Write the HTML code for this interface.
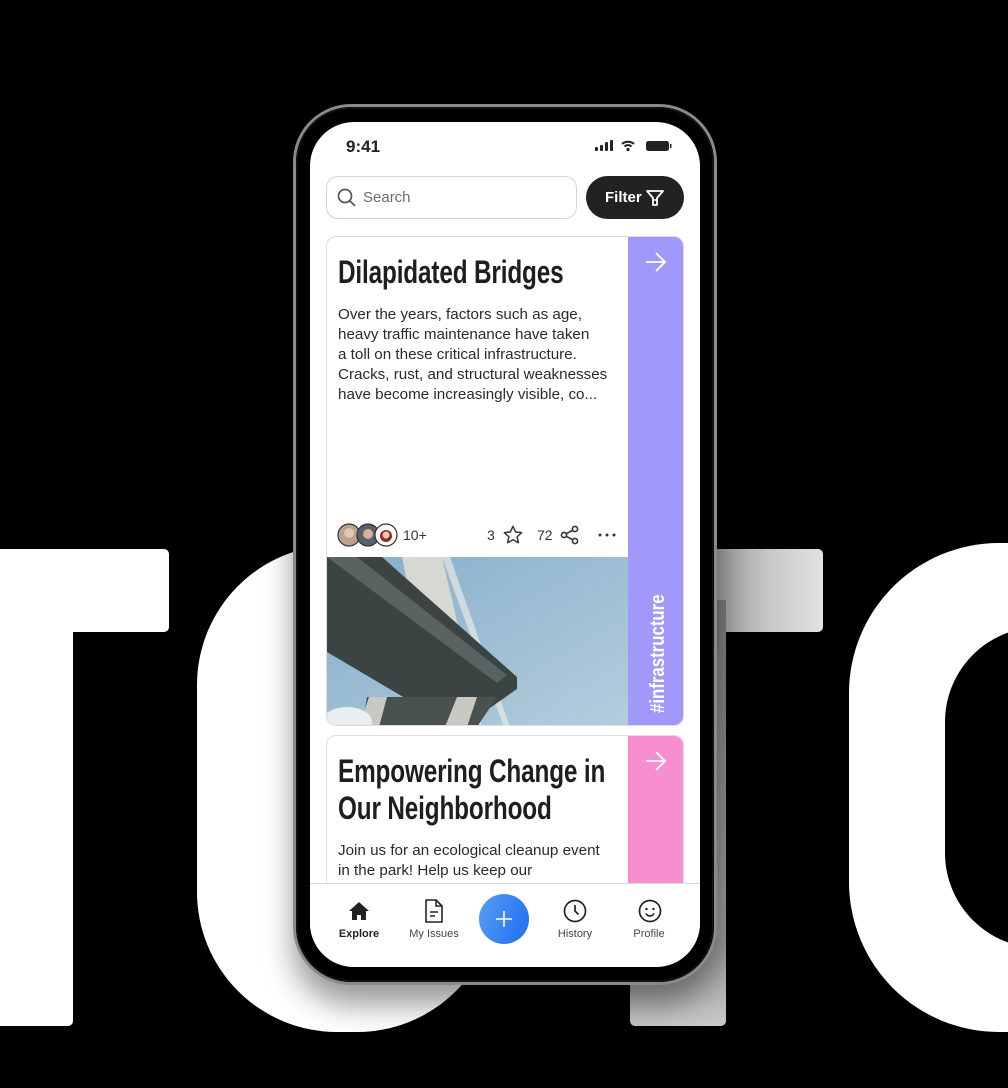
<!DOCTYPE html>
<html><head><meta charset="utf-8"><style>
*{margin:0;padding:0;box-sizing:border-box}
body{width:1008px;height:1088px;background:#000;position:relative;overflow:hidden;font-family:"Liberation Sans",sans-serif}
.a{position:absolute}
.w{background:#fff}
.t{font-family:"Liberation Sans Narrow","Liberation Sans",sans-serif;font-weight:700;color:#1e1e1e;white-space:nowrap;transform-origin:left top;letter-spacing:-0.2px}
.b{font-size:15.2px;color:#2a2a2a;line-height:20px;white-space:nowrap}
.nl{font-size:11px;color:#444;text-align:center;width:80px}
</style></head><body>
<div class="a w" style="left:-100px;top:549px;width:269px;height:83px;border-radius:0 5px 5px 0"></div>
<div class="a w" style="left:-10px;top:600px;width:83px;height:426px;border-radius:0 0 5px 0"></div>
<div class="a w" style="left:197px;top:545px;width:300px;height:487px;border-radius:140px"></div>
<div class="a" style="left:560px;top:549px;width:263px;height:83px;border-radius:0 5px 5px 0;background:linear-gradient(90deg,#888 0%,#999 60%,#c8c8c8 80%,#e2e2e2 100%)"></div>
<div class="a" style="left:630px;top:600px;width:96px;height:426px;border-radius:0 0 5px 5px;background:linear-gradient(180deg,#777 0%,#999 80%,#c8c8c8 100%)"></div>
<div class="a w" style="left:849px;top:543px;width:400px;height:489px;border-radius:150px"></div>
<div class="a" style="left:945px;top:627px;width:200px;height:321px;border-radius:95px;background:#000"></div>
<div class="a" style="left:293px;top:104px;width:424px;height:881px;border-radius:58px;background:#000;border:3px solid #8a8a8a;box-shadow:0 20px 30px rgba(0,0,0,.4)"></div>
<div class="a" style="left:296px;top:107px;width:418px;height:875px;border-radius:55px;border:2px solid #111"></div>
<div class="a w" style="left:310px;top:122px;width:390px;height:845px;border-radius:44px;overflow:hidden">
 <div class="a" style="left:36px;top:15px;font-size:17px;font-weight:700;color:#222">9:41</div>
 <svg class="a" style="left:284px;top:17px" width="80" height="14" viewBox="0 0 80 14">
  <rect x="1" y="8" width="3" height="4" rx="1" fill="#222"/><rect x="6" y="6" width="3" height="6" rx="1" fill="#222"/><rect x="11" y="3" width="3" height="9" rx="1" fill="#222"/><rect x="16" y="1" width="3" height="11" rx="1" fill="#222"/>
  <path d="M28 5a9 9 0 0 1 12 0M30.5 7.5a5 5 0 0 1 7 0" stroke="#222" stroke-width="2" fill="none"/><circle cx="34" cy="10.5" r="1.6" fill="#222"/>
  <rect x="52" y="2" width="23" height="10" rx="2.5" fill="#222"/><rect x="76" y="5" width="1.5" height="4" fill="#222"/>
 </svg>
 <div class="a" style="left:16px;top:54px;width:251px;height:43px;border:1px solid #d4d4d4;border-radius:12px"></div>
 <svg class="a" style="left:27px;top:66px" width="20" height="20" viewBox="0 0 20 20"><circle cx="8" cy="8" r="6.5" stroke="#555" stroke-width="1.7" fill="none"/><path d="M13 13l5 5" stroke="#555" stroke-width="1.7"/></svg>
 <div class="a" style="left:53px;top:67px;font-size:15px;color:#6b6b6b">Search</div>
 <div class="a" style="left:276px;top:54px;width:98px;height:43px;border-radius:22px;background:#222"></div>
 <div class="a" style="left:295px;top:67px;font-size:15px;color:#fff;font-weight:700">Filter</div>
 <svg class="a" style="left:335px;top:66px" width="20" height="20" viewBox="0 0 20 20"><path d="M2 3h16l-6 7v7H8v-7z" stroke="#fff" stroke-width="1.8" fill="none" stroke-linejoin="round"/><path d="M8 12h4" stroke="#fff" stroke-width="1.6"/></svg>

 <div class="a" style="left:16px;top:114px;width:358px;height:490px;border:1px solid #dcdcdc;border-radius:10px;overflow:hidden">
  <div class="a" style="left:301px;top:-1px;width:57px;height:492px;background:#a199f9"></div>
  <svg class="a" style="left:317px;top:14px" width="24" height="22" viewBox="0 0 24 22"><path d="M2 11h19M12 2l9 9-9 9" stroke="#fff" stroke-width="1.8" fill="none"/></svg>
  <div class="a" style="left:320px;top:476px;transform:rotate(-90deg) scaleX(.84);transform-origin:left top;font-weight:700;font-size:20px;color:#fff;white-space:nowrap">#infrastructure</div>
  <div class="a t" style="left:11px;top:17px;font-size:32px;transform:scaleX(.76)">Dilapidated Bridges</div>
  <div class="a b" style="left:11px;top:68px">Over the years, factors such as age,<br>heavy traffic maintenance have taken<br>a toll on these critical infrastructure.<br>Cracks, rust, and structural weaknesses<br>have become increasingly visible, co...</div>
  <svg class="a" style="left:10px;top:285px" width="64" height="26" viewBox="0 0 64 26">
   <circle cx="12" cy="13" r="11" fill="#b9a38f" stroke="#333" stroke-width="1.2"/><circle cx="12" cy="11" r="5" fill="#e4c7b0"/>
   <circle cx="31" cy="13" r="11" fill="#56616b" stroke="#333" stroke-width="1.2"/><circle cx="31" cy="12" r="5" fill="#d6b29a"/>
   <circle cx="49" cy="13" r="11" fill="#fff" stroke="#333" stroke-width="1.2"/><circle cx="49" cy="14" r="6" fill="#8c2b1e"/><circle cx="49" cy="13" r="3.5" fill="#f0c8b0"/>
  </svg>
  <div class="a" style="left:76px;top:290px;font-size:14px;color:#333">10+</div>
  <div class="a" style="left:160px;top:290px;font-size:14px;color:#333">3</div>
  <svg class="a" style="left:175px;top:287px" width="22" height="22" viewBox="0 0 24 24"><path d="M12 2.5l2.9 6.2 6.6.7-5 4.5 1.4 6.6L12 17.2l-5.9 3.3 1.4-6.6-5-4.5 6.6-.7z" stroke="#333" stroke-width="1.6" fill="none" stroke-linejoin="round"/></svg>
  <div class="a" style="left:210px;top:290px;font-size:14px;color:#333">72</div>
  <svg class="a" style="left:233px;top:288px" width="20" height="20" viewBox="0 0 20 20"><circle cx="15" cy="4" r="2.6" stroke="#333" stroke-width="1.6" fill="none"/><circle cx="4" cy="10" r="2.6" stroke="#333" stroke-width="1.6" fill="none"/><circle cx="15" cy="16" r="2.6" stroke="#333" stroke-width="1.6" fill="none"/><path d="M6.3 8.7l6.4-3.4M6.3 11.3l6.4 3.4" stroke="#333" stroke-width="1.6"/></svg>
  <svg class="a" style="left:270px;top:295px" width="20" height="6" viewBox="0 0 20 6"><circle cx="3" cy="3" r="1.5" fill="#333"/><circle cx="10" cy="3" r="1.5" fill="#333"/><circle cx="17" cy="3" r="1.5" fill="#333"/></svg>
  <svg class="a" style="left:0;top:320px" width="301" height="170" viewBox="0 0 301 170">
   <defs><linearGradient id="sky" x1="0" y1="0" x2="1" y2="1"><stop offset="0" stop-color="#86aecb"/><stop offset="1" stop-color="#b4cddd"/></linearGradient></defs>
   <rect width="301" height="170" fill="url(#sky)"/>
   <path d="M75 0l40 0 40 170-45 0z" fill="#d8d8d2"/>
   <path d="M115 0l8 0 60 170-6 0z" fill="#e8e8e4" opacity=".7"/>
   <path d="M0 0h55l135 120v12L150 160 110 160 0 95z" fill="#3b4443"/>
   <path d="M0 0h30l150 118-10 8z" fill="#5a6361"/>
   <path d="M40 140h130l-20 30H35z" fill="#4a5250"/>
   <path d="M42 140l-10 30h20l8-30z" fill="#c9c9c3"/>
   <path d="M130 140l-12 30h22l10-30z" fill="#c9c9c3"/>
   <ellipse cx="20" cy="165" rx="25" ry="15" fill="#e8eef2"/>
  </svg>
 </div>

 <div class="a" style="left:16px;top:613px;width:358px;height:200px;border:1px solid #dcdcdc;border-radius:10px;overflow:hidden">
  <div class="a" style="left:301px;top:-1px;width:57px;height:202px;background:#f78ecf"></div>
  <svg class="a" style="left:317px;top:14px" width="24" height="22" viewBox="0 0 24 22"><path d="M2 11h19M12 2l9 9-9 9" stroke="#fff" stroke-width="1.8" fill="none"/></svg>
  <div class="a t" style="left:11px;top:17px;font-size:32px;line-height:37px;transform:scaleX(.76)">Empowering Change in<br>Our Neighborhood</div>
  <div class="a b" style="left:11px;top:105px">Join us for an ecological cleanup event<br>in the park! Help us keep our</div>
 </div>

 <div class="a w" style="left:0;top:761px;width:390px;height:84px;border-top:1px solid #d8d8d8"></div>
 <svg class="a" style="left:38px;top:779px" width="22" height="20" viewBox="0 0 22 20"><path d="M11 1L1 10h3v9h5v-5h4v5h5v-9h3z" fill="#222"/></svg>
 <div class="a nl" style="left:9px;top:806px;color:#222;font-weight:700">Explore</div>
 <svg class="a" style="left:114px;top:777px" width="20" height="24" viewBox="0 0 20 24"><path d="M2 1h10l6 6v16H2z" stroke="#222" stroke-width="1.6" fill="none" stroke-linejoin="round"/><path d="M12 1v6h6M6 13h8M6 17h5" stroke="#222" stroke-width="1.5" fill="none"/></svg>
 <div class="a nl" style="left:84px;top:806px">My Issues</div>
 <div class="a" style="left:169px;top:772px;width:50px;height:50px;border-radius:50%;background:linear-gradient(110deg,#5a9cf6,#1d6ff0)"></div>
 <svg class="a" style="left:184px;top:787px" width="20" height="20" viewBox="0 0 20 20"><path d="M10 2v16M2 10h16" stroke="#fff" stroke-width="1.6"/></svg>
 <svg class="a" style="left:253px;top:777px" width="24" height="24" viewBox="0 0 24 24"><circle cx="12" cy="12" r="10.5" stroke="#222" stroke-width="1.7" fill="none"/><path d="M12 6v6l3.5 3.5" stroke="#222" stroke-width="1.7" fill="none"/></svg>
 <div class="a nl" style="left:225px;top:806px">History</div>
 <svg class="a" style="left:328px;top:777px" width="24" height="24" viewBox="0 0 24 24"><circle cx="12" cy="12" r="10.5" stroke="#222" stroke-width="1.7" fill="none"/><circle cx="8.5" cy="10" r="1.2" fill="#222"/><circle cx="15.5" cy="10" r="1.2" fill="#222"/><path d="M8 14.5a4.5 4.5 0 0 0 8 0" stroke="#222" stroke-width="1.6" fill="none"/></svg>
 <div class="a nl" style="left:299px;top:806px">Profile</div>
</div>
</body></html>
